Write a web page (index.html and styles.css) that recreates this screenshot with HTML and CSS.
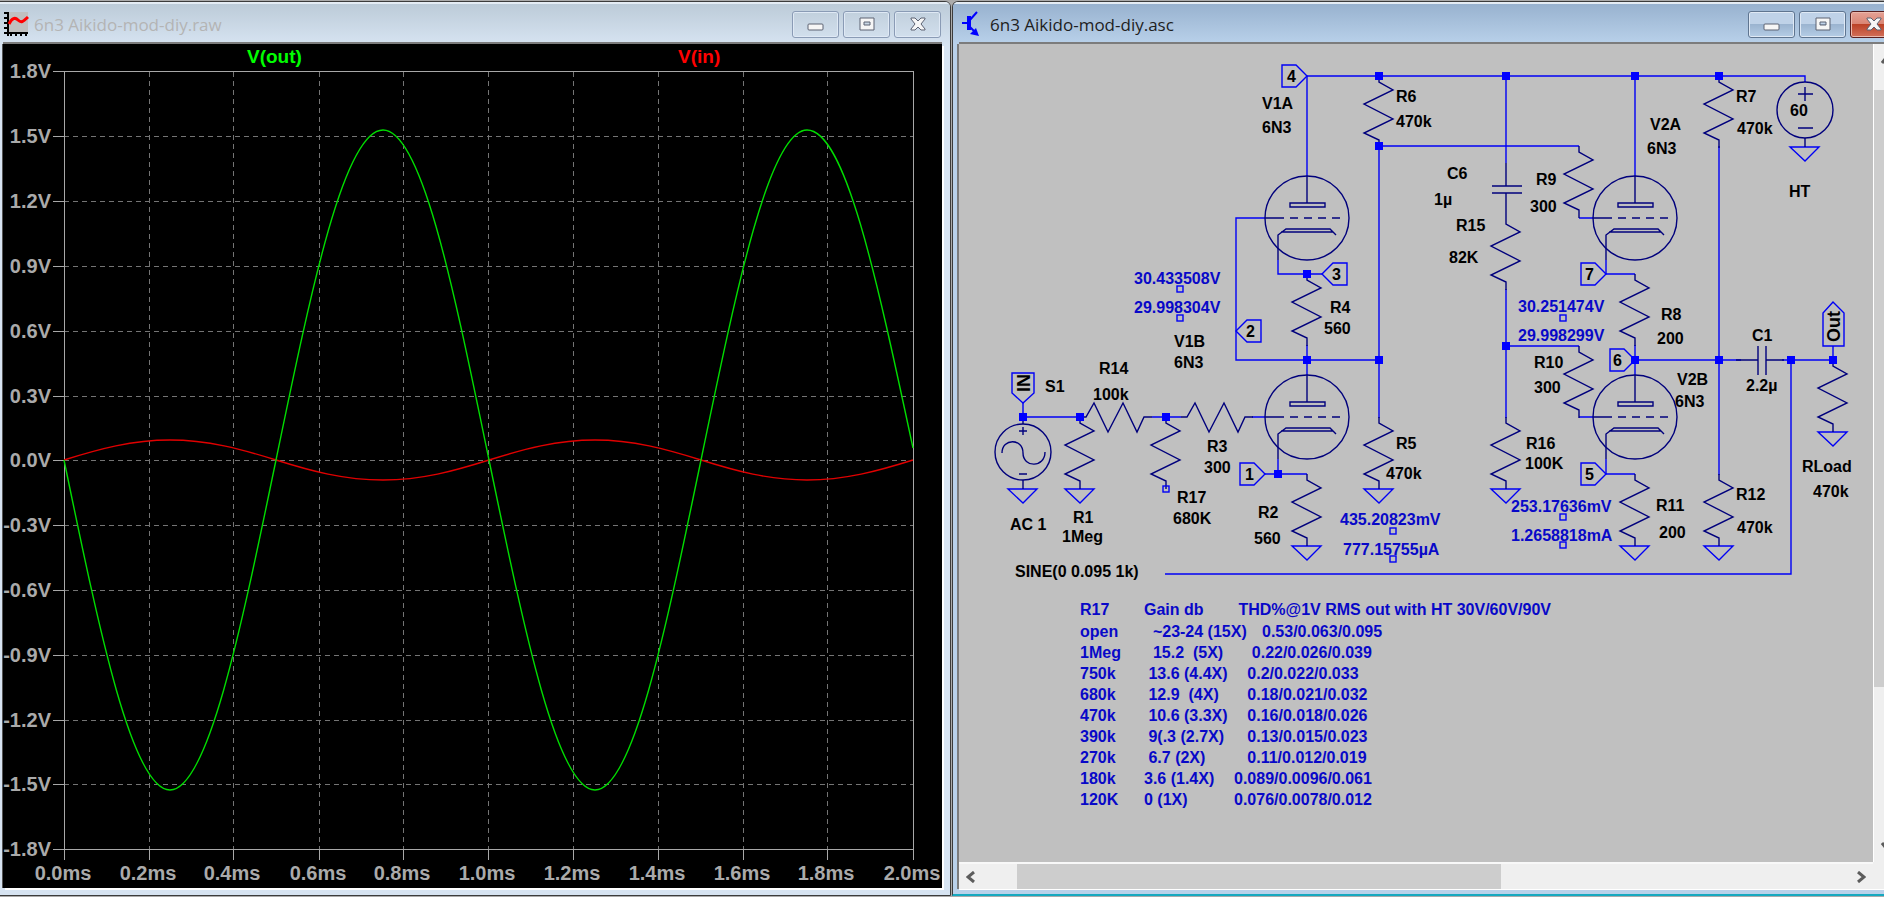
FILE: index.html
```
<!DOCTYPE html>
<html lang="en">
<head>
  <meta charset="UTF-8">
  <title>6n3 Aikido-mod-diy</title>
  <link rel="stylesheet" href="styles.css">
</head>
<body>
  <main class="desktop">

    <!-- waveform window -->
    <section class="window inactive">
      <header class="titlebar">
        <svg class="app-icon" width="26" height="26" viewBox="0 0 26 26">
          <rect x="5" y="1" width="20" height="20" fill="#c0c0c0"/>
          <path d="M5 1V25M1 2H5M1 7H5M1 12H5M1 17H5M1 22H25M8 22V25M13 22V25M18 22V25M23 22V25" stroke="#000" stroke-width="2" fill="none"/>
          <path d="M6 13C9 7 12 6 15 9S20 11 25 6" stroke="#f00" stroke-width="3" fill="none"/>
        </svg>
        <h1>6n3 Aikido-mod-diy.raw</h1>
        <div class="controls">
          <button type="button" aria-label="Minimize"><svg width="18" height="16" viewBox="0 0 18 16"><rect x="1" y="8" width="15" height="6" rx="1"/></svg></button>
          <button type="button" aria-label="Maximize"><svg width="18" height="16" viewBox="0 0 18 16"><path fill-rule="evenodd" d="M2 2H16V14H2ZM6 6H12V9H6Z"/></svg></button>
          <button type="button" aria-label="Close"><svg width="18" height="16" viewBox="0 0 18 16"><path d="M2 2H6L9 5L12 2H16V3L12 8L16 13V14H12L9 11L6 14H2V13L6 8L2 3Z"/></svg></button>
        </div>
      </header>
      <div class="plot">
        <svg class="drawing">
          <g transform="translate(-3 -44)">
            <g class="grid">
              <path d="M64 136H913M64 201H913M64 266H913M64 331H913M64 396H913M64 460H913M64 525H913M64 590H913M64 655H913M64 720H913M64 784H913"/>
              <path d="M149 72V849M233 72V849M319 72V849M403 72V849M488 72V849M573 72V849M658 72V849M743 72V849M827 72V849"/>
            </g>
            <path class="axis" d="M53 71H913V860M64 71V860M53 849H913M53 136H64M53 201H64M53 266H64M53 331H64M53 396H64M53 460H64M53 525H64M53 590H64M53 655H64M53 720H64M53 784H64M149 849V860M233 849V860M319 849V860M403 849V860M488 849V860M573 849V860M658 849V860M743 849V860M827 849V860"/>
            <g class="labels volts">
              <text x="51" y="78">1.8V</text>
              <text x="51" y="143">1.5V</text>
              <text x="51" y="208">1.2V</text>
              <text x="51" y="273">0.9V</text>
              <text x="51" y="338">0.6V</text>
              <text x="51" y="403">0.3V</text>
              <text x="51" y="467">0.0V</text>
              <text x="51" y="532">-0.3V</text>
              <text x="51" y="597">-0.6V</text>
              <text x="51" y="662">-0.9V</text>
              <text x="51" y="727">-1.2V</text>
              <text x="51" y="791">-1.5V</text>
              <text x="51" y="856">-1.8V</text>
            </g>
            <g class="labels times">
              <text x="63" y="880">0.0ms</text>
              <text x="148" y="880">0.2ms</text>
              <text x="232" y="880">0.4ms</text>
              <text x="318" y="880">0.6ms</text>
              <text x="402" y="880">0.8ms</text>
              <text x="487" y="880">1.0ms</text>
              <text x="572" y="880">1.2ms</text>
              <text x="657" y="880">1.4ms</text>
              <text x="742" y="880">1.6ms</text>
              <text x="826" y="880">1.8ms</text>
              <text x="912" y="880">2.0ms</text>
            </g>
            <text class="trace-name out" x="247" y="63">V(out)</text>
            <text class="trace-name in" x="678" y="63">V(in)</text>
            <path class="trace in" d="M64 460c35 -11 68 -20 106 -20s71 9 106 20s68 20 107 20s71 -9 106 -20s68 -20 106 -20s71 9 106 20s68 20 106 20s71 -9 106 -20"/>
            <path class="trace out" d="M64 460c35 169 68 330 106 330s71 -161 106 -330s68 -330 107 -330s71 161 106 330s68 330 106 330s71 -161 106 -330s68 -330 106 -330s69 145 106 318"/>
          </g>
        </svg>
      </div>
    </section>

    <!-- schematic window -->
    <section class="window active">
      <header class="titlebar">
        <svg class="app-icon" width="26" height="26" viewBox="0 0 26 26">
          <path d="M3 12H9M10 10L18 1M10 15L16 21" stroke="#00f" stroke-width="2" fill="none"/>
          <path d="M10 5V19" stroke="#00f" stroke-width="4"/>
          <path d="M20 25L11 23L17 17Z" fill="#00f"/>
        </svg>
        <h1>6n3 Aikido-mod-diy.asc</h1>
        <div class="controls">
          <button type="button" aria-label="Minimize"><svg width="18" height="16" viewBox="0 0 18 16"><rect x="1" y="8" width="15" height="6" rx="1"/></svg></button>
          <button type="button" aria-label="Maximize"><svg width="18" height="16" viewBox="0 0 18 16"><path fill-rule="evenodd" d="M2 2H16V14H2ZM6 6H12V9H6Z"/></svg></button>
          <button type="button" class="close" aria-label="Close"><svg width="18" height="16" viewBox="0 0 18 16"><path d="M2 2H6L9 5L12 2H16V3L12 8L16 13V14H12L9 11L6 14H2V13L6 8L2 3Z"/></svg></button>
        </div>
      </header>
      <div class="sheet-area">
        <div class="sheet">
          <svg class="drawing">
            <defs>
              <path id="res" d="M0 0V6L14 14L-15 28L14 43L-15 57L0 64V72"/>
              <path id="gnd" d="M-15 0H14L0 14Z"/>
              <rect id="dot" x="-4" y="-4" width="8" height="8"/>
              <rect id="probe" x="-3" y="-3" width="6" height="6"/>
              <path id="flag-r" d="M0 0L-11 -11H-25V11H-11Z"/>
              <path id="flag-l" d="M0 0L11 -11H25V11H11Z"/>
              <g id="triode">
                <circle r="42"/>
                <path d="M0 -42V-15M-17 -15H18V-11H-17ZM-42 0H-23M-17 0H-9M-3 0H5M11 0H19M25 0H33"/>
                <path d="M-29 42V17L-21 11H23L29 17M-26 14H26"/>
              </g>
            </defs>
            <g transform="translate(-959 -44)">
              <g class="wire">
                <path d="M1307 176V76H1805V82M1379 146H1579M1379 146V418M1506 76V163M1635 76V176M1719 146V475"/>
                <path d="M1265 218H1236V360H1379M1278 260V274H1322M1307 345V375M1579 218H1593M1606 260V274H1635M1635 345V375"/>
                <path d="M1506 289V418M1506 346H1579M1579 417H1593M1606 459V474H1635M1635 360H1741M1782 360H1833V346M1791 360V574H1165"/>
                <path d="M1023 403V417H1080M1152 417H1181M1252 417H1265M1278 459V474M1265 474H1307"/>
                <path d="M1023 403L1012 393V373H1034V393ZM1833 302L1844 313V346H1823V313Z"/>
                <use href="#flag-r" x="1307" y="76"/>
                <use href="#flag-r" x="1606" y="274"/>
                <use href="#flag-r" x="1265" y="474"/>
                <use href="#flag-r" x="1635" y="360"/>
                <use href="#flag-r" x="1606" y="474"/>
                <use href="#flag-l" x="1322" y="274"/>
                <use href="#flag-l" x="1236" y="331"/>
                <use href="#gnd" x="1805" y="147"/>
                <use href="#gnd" x="1023" y="489"/>
                <use href="#gnd" x="1080" y="489"/>
                <use href="#gnd" x="1379" y="489"/>
                <use href="#gnd" x="1506" y="489"/>
                <use href="#gnd" x="1307" y="546"/>
                <use href="#gnd" x="1635" y="546"/>
                <use href="#gnd" x="1719" y="546"/>
                <use href="#gnd" x="1833" y="432"/>
              </g>
              <g class="part">
                <use href="#res" x="1379" y="76"/>
                <use href="#res" x="1719" y="76"/>
                <use href="#res" x="1579" y="146"/>
                <use href="#res" x="1506" y="218"/>
                <use href="#res" x="1307" y="274"/>
                <use href="#res" x="1635" y="274"/>
                <use href="#res" x="1579" y="346"/>
                <use href="#res" x="1833" y="360"/>
                <use href="#res" x="1080" y="417"/>
                <use href="#res" x="1166" y="417"/>
                <use href="#res" x="1379" y="417"/>
                <use href="#res" x="1506" y="417"/>
                <use href="#res" x="1307" y="474"/>
                <use href="#res" x="1635" y="474"/>
                <use href="#res" x="1719" y="474"/>
                <use href="#res" transform="translate(1080 417) rotate(-90)"/>
                <use href="#res" transform="translate(1181 417) rotate(-90)"/>
                <use href="#triode" x="1307" y="218"/>
                <use href="#triode" x="1307" y="417"/>
                <use href="#triode" x="1635" y="218"/>
                <use href="#triode" x="1635" y="417"/>
                <!-- capacitors -->
                <path d="M1506 163V186M1492 186H1522M1492 193H1522M1506 193V218"/>
                <path d="M1736 360H1758M1758 346V375M1766 346V375M1766 360H1784"/>
                <!-- sources -->
                <circle cx="1805" cy="110" r="28"/>
                <path d="M1798 94H1813M1805 87V101M1798 128H1813M1805 138V147"/>
                <circle cx="1023" cy="452" r="28"/>
                <path d="M1023 417V424M1019 431H1027M1023 427V435M1019 474H1027M1023 480V489"/>
                <path d="M1002 453C1002 438 1023 438 1023 453S1045 468 1045 452"/>
              </g>
              <g class="dots">
                <use href="#dot" x="1379" y="76"/>
                <use href="#dot" x="1506" y="76"/>
                <use href="#dot" x="1635" y="76"/>
                <use href="#dot" x="1719" y="76"/>
                <use href="#dot" x="1379" y="146"/>
                <use href="#dot" x="1307" y="274"/>
                <use href="#dot" x="1307" y="360"/>
                <use href="#dot" x="1379" y="360"/>
                <use href="#dot" x="1506" y="346"/>
                <use href="#dot" x="1635" y="360"/>
                <use href="#dot" x="1719" y="360"/>
                <use href="#dot" x="1791" y="360"/>
                <use href="#dot" x="1833" y="360"/>
                <use href="#dot" x="1023" y="417"/>
                <use href="#dot" x="1080" y="417"/>
                <use href="#dot" x="1166" y="417"/>
                <use href="#dot" x="1278" y="474"/>
              </g>
              <g class="probes">
                <use href="#probe" x="1180" y="289"/>
                <use href="#probe" x="1180" y="318"/>
                <use href="#probe" x="1563" y="318"/>
                <use href="#probe" x="1563" y="517"/>
                <use href="#probe" x="1563" y="545"/>
                <use href="#probe" x="1393" y="531"/>
                <use href="#probe" x="1393" y="559"/>
                <use href="#probe" x="1166" y="489"/>
              </g>
              <g class="names">
                <text x="1287" y="82">4</text>
                <text x="1332" y="280">3</text>
                <text x="1246" y="337">2</text>
                <text x="1245" y="480">1</text>
                <text x="1585" y="280">7</text>
                <text x="1613" y="366">6</text>
                <text x="1585" y="480">5</text>
                <text x="1262" y="109">V1A</text>
                <text x="1262" y="133">6N3</text>
                <text x="1396" y="102">R6</text>
                <text x="1396" y="127">470k</text>
                <text x="1447" y="179">C6</text>
                <text x="1434" y="205">1µ</text>
                <text x="1456" y="231">R15</text>
                <text x="1449" y="263">82K</text>
                <text x="1536" y="185">R9</text>
                <text x="1530" y="212">300</text>
                <text x="1650" y="130">V2A</text>
                <text x="1647" y="154">6N3</text>
                <text x="1736" y="102">R7</text>
                <text x="1737" y="134">470k</text>
                <text x="1790" y="116">60</text>
                <text x="1789" y="197">HT</text>
                <text x="1174" y="347">V1B</text>
                <text x="1174" y="368">6N3</text>
                <text x="1330" y="313">R4</text>
                <text x="1324" y="334">560</text>
                <text x="1661" y="320">R8</text>
                <text x="1657" y="344">200</text>
                <text x="1534" y="368">R10</text>
                <text x="1534" y="393">300</text>
                <text x="1677" y="385">V2B</text>
                <text x="1675" y="407">6N3</text>
                <text x="1752" y="341">C1</text>
                <text x="1746" y="391">2.2µ</text>
                <text x="1045" y="392">S1</text>
                <text x="1099" y="374">R14</text>
                <text x="1093" y="400">100k</text>
                <text x="1207" y="452">R3</text>
                <text x="1204" y="473">300</text>
                <text x="1177" y="503">R17</text>
                <text x="1173" y="524">680K</text>
                <text x="1258" y="518">R2</text>
                <text x="1254" y="544">560</text>
                <text x="1010" y="530">AC 1</text>
                <text x="1073" y="523">R1</text>
                <text x="1062" y="542">1Meg</text>
                <text x="1015" y="577">SINE(0 0.095 1k)</text>
                <text x="1396" y="449">R5</text>
                <text x="1386" y="479">470k</text>
                <text x="1526" y="449">R16</text>
                <text x="1525" y="469">100K</text>
                <text x="1656" y="511">R11</text>
                <text x="1659" y="538">200</text>
                <text x="1736" y="500">R12</text>
                <text x="1737" y="533">470k</text>
                <text x="1802" y="472">RLoad</text>
                <text x="1813" y="497">470k</text>
              </g>
              <g class="names port">
                <text transform="translate(1030 392) rotate(-90)">IN</text>
                <text transform="translate(1840 342) rotate(-90)">Out</text>
              </g>
              <g class="readings">
                <text x="1134" y="284">30.433508V</text>
                <text x="1134" y="313">29.998304V</text>
                <text x="1518" y="312">30.251474V</text>
                <text x="1518" y="341">29.998299V</text>
                <text x="1340" y="525">435.20823mV</text>
                <text x="1343" y="555">777.15755µA</text>
                <text x="1511" y="512">253.17636mV</text>
                <text x="1511" y="541">1.2658818mA</text>
              </g>
            </g>
          </svg>
          <table class="notes">
            <thead>
              <tr><th class="r17">R17</th><th class="gain">Gain db</th><th class="thd"> THD%@1V RMS out with HT 30V/60V/90V</th></tr>
            </thead>
            <tbody>
              <tr><td>open</td><td>  ~23-24 (15X)</td><td class="indent">0.53/0.063/0.095</td></tr>
              <tr><td>1Meg</td><td>  15.2  (5X)</td><td>    0.22/0.026/0.039</td></tr>
              <tr><td>750k</td><td> 13.6 (4.4X)</td><td>   0.2/0.022/0.033</td></tr>
              <tr><td>680k</td><td> 12.9  (4X)</td><td>   0.18/0.021/0.032</td></tr>
              <tr><td>470k</td><td> 10.6 (3.3X)</td><td>   0.16/0.018/0.026</td></tr>
              <tr><td>390k</td><td> 9(.3 (2.7X)</td><td>   0.13/0.015/0.023</td></tr>
              <tr><td>270k</td><td> 6.7 (2X)</td><td>   0.11/0.012/0.019</td></tr>
              <tr><td>180k</td><td>3.6 (1.4X)</td><td>0.089/0.0096/0.061</td></tr>
              <tr><td>120K</td><td>0 (1X)</td><td>0.076/0.0078/0.012</td></tr>
            </tbody>
          </table>
        </div>
        <div class="vscroll">
          <button type="button" aria-label="Scroll up"><svg width="12" height="10" viewBox="0 0 12 10"><path d="M2 8L6 3L10 8"/></svg></button>
          <div class="thumb"></div>
          <button type="button" aria-label="Scroll down"><svg width="12" height="10" viewBox="0 0 12 10"><path d="M2 2L6 7L10 2"/></svg></button>
        </div>
        <div class="hscroll">
          <button type="button" aria-label="Scroll left"><svg width="10" height="12" viewBox="0 0 10 12"><path d="M8 1L2 6L8 11"/></svg></button>
          <div class="thumb"></div>
          <button type="button" aria-label="Scroll right"><svg width="10" height="12" viewBox="0 0 10 12"><path d="M2 1L8 6L2 11"/></svg></button>
        </div>
        <div class="corner"></div>
      </div>
    </section>

  </main>
</body>
</html>
```
FILE: styles.css
```
* {
  box-sizing: border-box;
}

body {
  margin: 0;
  overflow: hidden;
  background: #ababab;
  font-family: "Liberation Sans", Arial, sans-serif;
}

.desktop {
  display: grid;
  grid-template-columns: 951fr 955fr;
  height: 100vh;
  margin-right: -22px;
  padding: 1px 0;
}

/* windows */
.window {
  display: flex;
  flex-direction: column;
  min-width: 0;
  border: 1px solid #3c3c3c;
  border-radius: 6px 6px 0 0;
  overflow: hidden;
}

.inactive {
  margin-left: -6px;
  padding: 0 8px 7px 8px;
  background: #d7e4f2;
}

.active {
  margin-left: 1px;
  padding: 0 7px 5px 6px;
  background: #b9d1ea;
  border-bottom: 2px solid #17a9c0;
}

.titlebar {
  display: flex;
  align-items: center;
  flex: none;
  height: 42px;
  margin: 0 -8px;
  padding: 0 8px;
  border-top: 2px solid #e4ecf4;
}

.inactive .titlebar {
  background: linear-gradient(#bccbd8, #d6e3f1);
  color: #b4b4b4;
}

.active .titlebar {
  background: linear-gradient(#98b2cf, #b9d1ea);
  color: #1e1e1e;
}

.titlebar h1 {
  flex: 1;
  margin: 0 0 0 5px;
  font: 17px "Open Sans", "Noto Sans", sans-serif;
}

.controls {
  display: flex;
  gap: 4px;
  margin-right: 1px;
}

.controls button {
  display: flex;
  align-items: center;
  justify-content: center;
  width: 47px;
  height: 27px;
  padding: 0;
  border: 1px solid #8a9bb5;
  border-radius: 3px;
  background: transparent;
  box-shadow: inset 0 0 0 1px #dfe9f5;
}

.active .controls button {
  border-color: #5f7590;
  background: linear-gradient(#bfd2e8 50%, #9bb4d0 50%, #b5cde6);
}

.active .controls .close {
  border-color: #5a2020;
  background: linear-gradient(#e5a296, #d98472 50%, #bb4227 50%, #d2705a);
  box-shadow: inset 0 0 0 1px #eab8ac;
}

.controls svg {
  fill: #f6f6f6;
  stroke: #5c6272;
  stroke-width: 1;
}

.drawing {
  display: block;
  width: 100%;
  height: 100%;
}

/* waveform plot */
.plot {
  flex: 1;
  min-height: 0;
  background: #000;
  box-shadow: 0 -2px #7c7c7c, -1px 0 #555, 2px 2px #fff;
}

.grid {
  fill: none;
  stroke: #747474;
  stroke-dasharray: 5 4;
}

.axis {
  fill: none;
  stroke: #a8a8a8;
}

.grid,
.axis {
  stroke-width: 1;
  shape-rendering: crispEdges;
}

.labels {
  fill: #aaa;
  font-size: 20px;
  font-weight: bold;
}

.volts {
  text-anchor: end;
}

.times {
  text-anchor: middle;
}

.trace-name {
  font-size: 19px;
  font-weight: bold;
}

.trace {
  fill: none;
  stroke-width: 1.4;
}

.trace-name.out {
  fill: #0f0;
}

.trace-name.in {
  fill: #f00;
}

.trace.out {
  stroke: #00dc00;
}

.trace.in {
  stroke: #e00000;
}

/* schematic */
.sheet-area {
  display: grid;
  grid-template-columns: 1fr 25px;
  grid-template-rows: 1fr 27px;
  flex: 1;
  min-height: 0;
  box-shadow: 0 -2px #7c7c7c, -2px 0 #7c7c7c, 0 1px #fff;
}

.sheet {
  position: relative;
  overflow: hidden;
  background: #c0c0c0;
}

.wire,
.part,
.probes {
  fill: none;
  stroke-width: 1.4;
}

.wire,
.probes {
  stroke: #0000f5;
}

.part {
  stroke: #00007c;
}

.dots {
  fill: #00f;
}

.names,
.readings {
  font-size: 16px;
  font-weight: bold;
}

.names {
  fill: #000;
}

.port {
  font-size: 18px;
}

.readings {
  fill: #0808c8;
}

.notes {
  position: absolute;
  left: 121px;
  top: 554px;
  width: 500px;
  table-layout: fixed;
  border-collapse: collapse;
  color: #0808c8;
  font-size: 16px;
  font-weight: bold;
  line-height: 21px;
}

.notes th,
.notes td {
  padding: 0;
  text-align: left;
  white-space: pre;
}

.notes thead th {
  line-height: 23px;
}

.notes .indent {
  padding-left: 28px;
}

.r17 {
  width: 64px;
}

.gain {
  width: 90px;
}

/* scrollbars */
.vscroll,
.hscroll {
  display: flex;
  background: #efefef;
}

.vscroll {
  flex-direction: column;
  border-left: 1px solid #fff;
}

.hscroll {
  border-top: 2px solid #f8f8f8;
}

.vscroll button,
.hscroll button {
  display: flex;
  align-items: center;
  justify-content: center;
  flex: none;
  padding: 0;
  border: 0;
  background: transparent;
}

.vscroll button {
  height: 32px;
}

.hscroll button {
  width: 24px;
}

.vscroll svg,
.hscroll svg {
  fill: none;
  stroke: #5c5c5c;
  stroke-width: 3;
}

.thumb {
  background: #cdcdcd;
}

.vscroll .thumb {
  flex: 0 0 73%;
  margin: 14px 0 auto;
}

.hscroll .thumb {
  flex: 0 0 53%;
  margin: 0 auto 0 34px;
}

.corner {
  background: #efefef;
}
```
